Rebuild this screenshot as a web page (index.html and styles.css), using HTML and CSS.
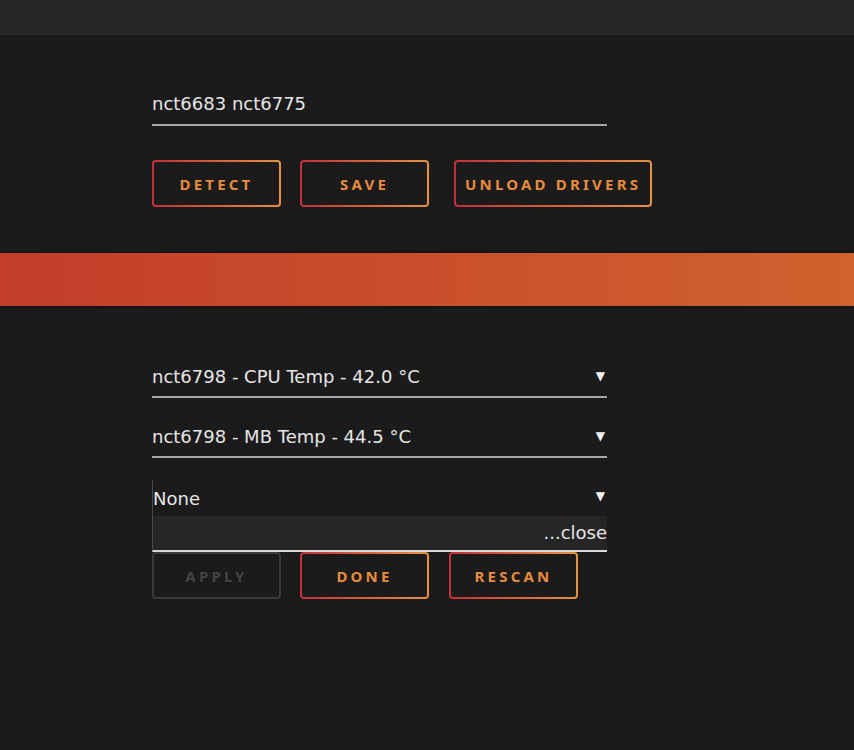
FILE: index.html
```html
<!DOCTYPE html>
<html lang="en">
<head>
    <meta charset="UTF-8">
    <title>Sensors</title>
    <link rel="stylesheet" href="styles.css">
</head>
<body>
    <div class="topbar"></div>

    <div class="panel">
        <div class="field">nct6683 nct6775</div>
        <div class="buttons">
            <button class="btn">Detect</button>
            <button class="btn">Save</button>
            <button class="btn btn-wide">Unload drivers</button>
        </div>
    </div>

    <div class="band"></div>

    <div class="panel panel-sensors">
        <div class="select">
            <span>nct6798 - CPU Temp - 42.0 °C</span>
            <span class="arrow">▼</span>
        </div>
        <div class="select">
            <span>nct6798 - MB Temp - 44.5 °C</span>
            <span class="arrow">▼</span>
        </div>
        <div class="select select-open">
            <span>None</span>
            <span class="arrow">▼</span>
            <div class="options">
                <div class="option">...close</div>
            </div>
        </div>
        <div class="buttons">
            <button class="btn" disabled>Apply</button>
            <button class="btn">Done</button>
            <button class="btn btn-last">Rescan</button>
        </div>
    </div>
</body>
</html>
```

FILE: styles.css
```css
body {
    margin: 0;
    background-color: #1b1b1b;
    font-family: "DejaVu Sans", sans-serif;
    color: #e6e6e6;
}
.topbar {
    height: 34px;
    background-color: #262626;
    border-bottom: 1px solid #2c2c2c;
}
.panel {
    width: 455px;
    margin-left: 152px;
    padding-top: 49px;
}
.panel-sensors {
    padding-top: 50px;
}
.field {
    height: 40px;
    line-height: 40px;
    font-size: 18px;
    border-bottom: 2px solid #a8a8a8;
}
.buttons {
    display: flex;
    margin-top: 34px;
}
.btn {
    flex-shrink: 0;
    min-width: 129px;
    height: 47px;
    padding: 0 9px;
    margin-right: 19px;
    font-family: "Noto Sans", sans-serif;
    font-weight: 700;
    font-size: 15px;
    letter-spacing: 3.2px;
    white-space: nowrap;
    text-transform: uppercase;
    color: #e88b3d;
    border: 2px solid transparent;
    border-radius: 4px;
    background: linear-gradient(#1b1b1b, #1b1b1b) padding-box,
                linear-gradient(90deg, #c3303b, #e9913f) border-box;
    cursor: pointer;
}
.btn-wide {
    margin-left: 6px;
}
.btn-last {
    margin-left: 1px;
}
.btn:disabled {
    color: #454545;
    background: #1b1b1b;
    border-color: #3a3a3a;
    cursor: default;
}
.band {
    height: 53px;
    margin-top: 46px;
    background: linear-gradient(90deg, #c33d2a, #d0622e);
    box-shadow: 0 0 3px rgba(0, 0, 0, 0.8);
}
.select {
    position: relative;
    display: flex;
    justify-content: space-between;
    align-items: center;
    height: 40px;
    font-size: 18px;
    border-bottom: 2px solid #a8a8a8;
    margin-bottom: 18px;
}
.select-open {
    margin-bottom: 0;
}
.select-open::before {
    content: "";
    position: absolute;
    left: 0;
    top: 4px;
    height: 36px;
    border-left: 1px solid #4a4a4a;
}
.select-open span:first-child {
    padding-left: 1px;
    padding-top: 5px;
}
.arrow {
    font-size: 12px;
    padding-right: 2px;
    color: #f2f2f2;
}
.options {
    position: absolute;
    left: 0;
    right: 0;
    top: 40px;
    height: 34px;
    background-color: #262626;
    border-left: 1px solid #4a4a4a;
    border-bottom: 2px solid #d8d8d8;
}
.option {
    text-align: right;
    line-height: 34px;
    font-size: 18px;
}
```
